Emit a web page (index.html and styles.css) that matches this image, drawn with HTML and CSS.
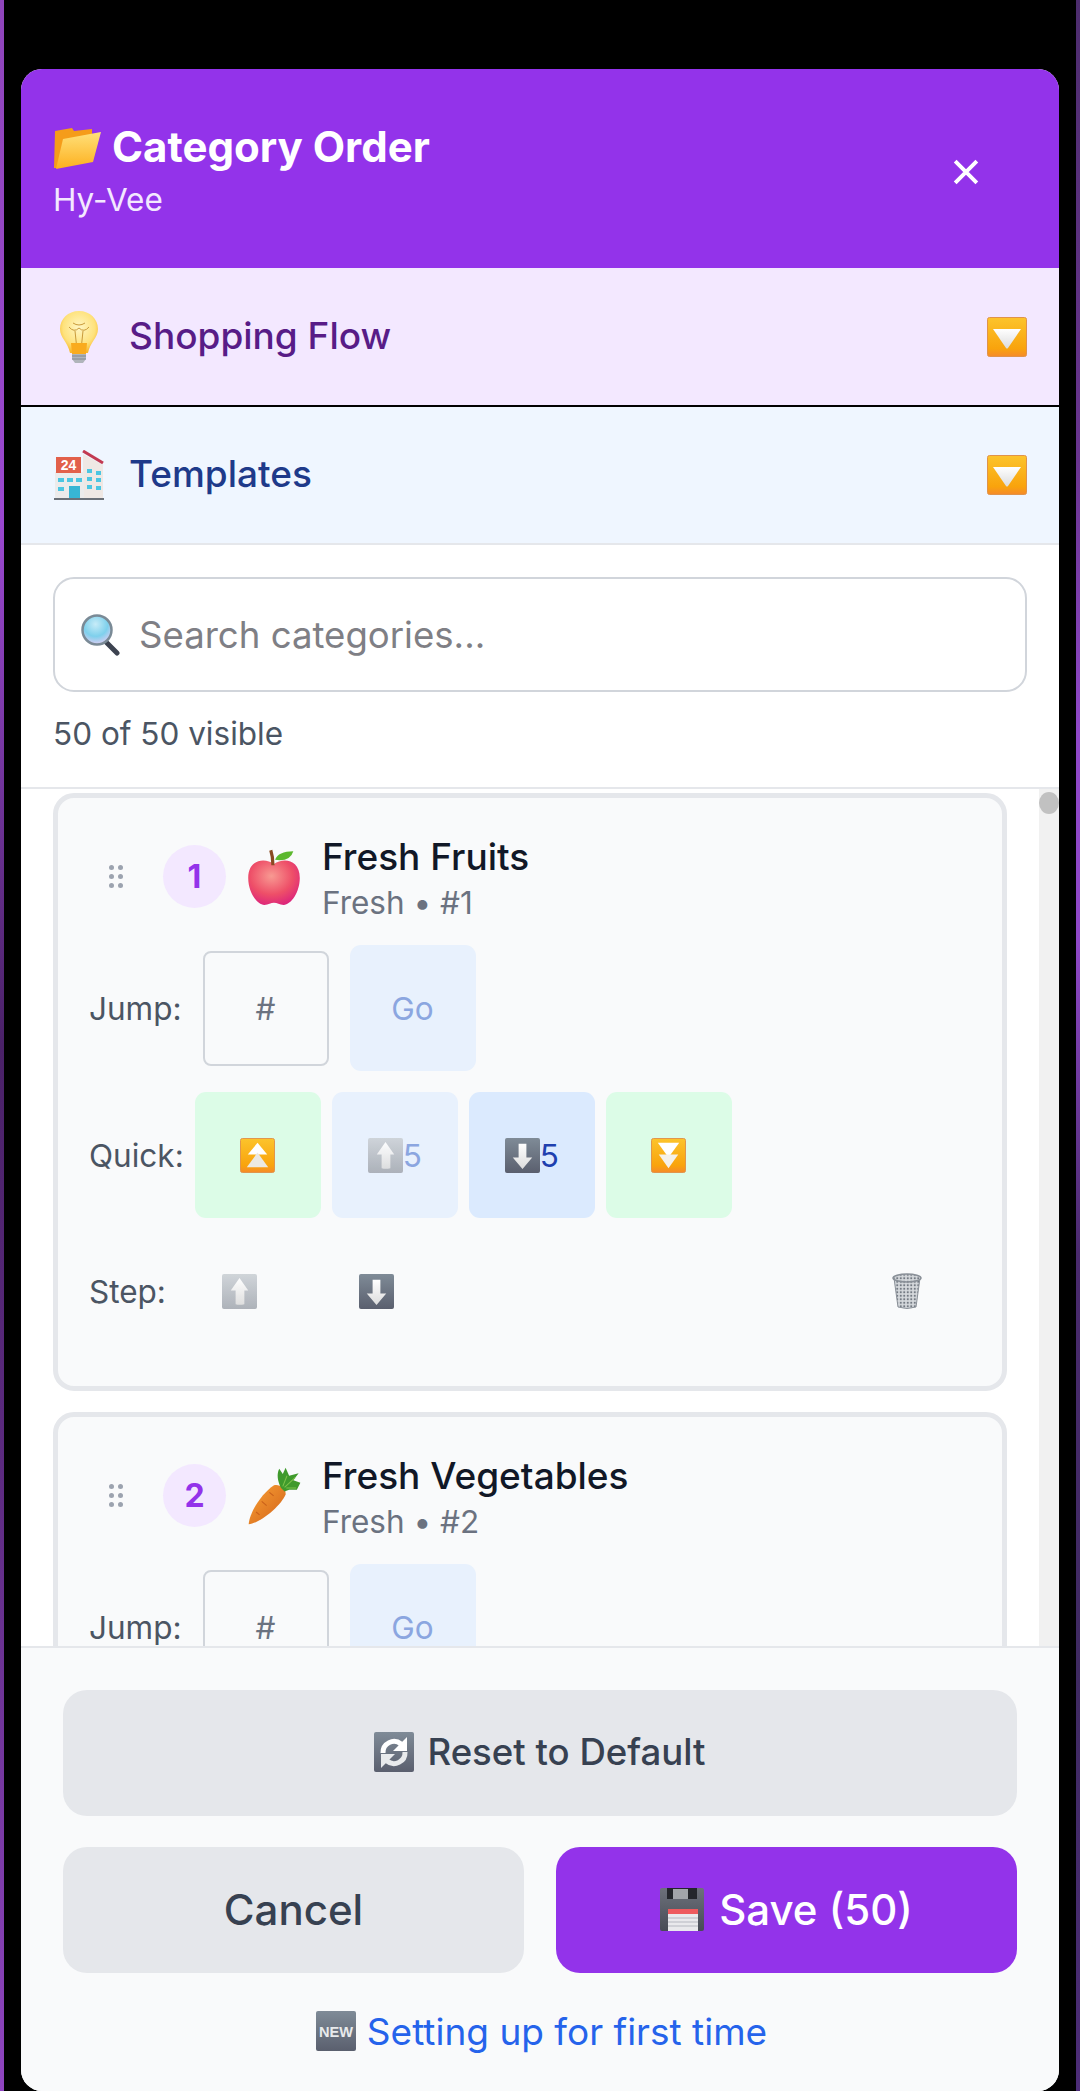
FILE: index.html
```html
<!DOCTYPE html>
<html lang="en">
<head>
  <meta charset="UTF-8">
  <title>Category Order</title>
  <link rel="stylesheet" href="styles.css">
</head>
<body>
  <svg class="sprites" width="0" height="0" aria-hidden="true">
    <defs>
      <linearGradient id="gOrange" x1="0" y1="0" x2="0" y2="1"><stop offset="0" stop-color="#fcc42c"/><stop offset=".8" stop-color="#f9a30c"/><stop offset="1" stop-color="#f58a2a"/></linearGradient>
      <linearGradient id="gLight" x1="0" y1="0" x2="0" y2="1"><stop offset="0" stop-color="#ccd1d6"/><stop offset="1" stop-color="#a6abb3"/></linearGradient>
      <linearGradient id="gDark" x1="0" y1="0" x2="0" y2="1"><stop offset="0" stop-color="#7f8b97"/><stop offset="1" stop-color="#5a5f6e"/></linearGradient>
      <linearGradient id="gFoot" x1="0" y1="0" x2="0" y2="1"><stop offset="0" stop-color="#ffffff"/><stop offset="1" stop-color="#dcdcdc"/></linearGradient>
      <linearGradient id="gCarrot" x1="0" y1="0" x2="1" y2="1"><stop offset="0" stop-color="#f9a134"/><stop offset="1" stop-color="#d2621a"/></linearGradient>
      <linearGradient id="gFolder" x1="0" y1="0" x2="0" y2="1"><stop offset="0" stop-color="#ffe07a"/><stop offset="1" stop-color="#fdb01e"/></linearGradient>
      <linearGradient id="gFloppy" x1="0" y1="0" x2="0" y2="1"><stop offset="0" stop-color="#6d717b"/><stop offset="1" stop-color="#474b55"/></linearGradient>
      <radialGradient id="gApple" cx=".45" cy=".35" r=".75"><stop offset="0" stop-color="#f89a92"/><stop offset=".55" stop-color="#ee4f68"/><stop offset="1" stop-color="#d81a80"/></radialGradient>
      <radialGradient id="gBulb" cx=".5" cy=".4" r=".6"><stop offset="0" stop-color="#fff6c4"/><stop offset=".7" stop-color="#fee27c"/><stop offset="1" stop-color="#f9b92e"/></radialGradient>
      <radialGradient id="gLens" cx=".45" cy=".3" r=".7"><stop offset="0" stop-color="#c7ecf8"/><stop offset=".6" stop-color="#7ed0ec"/><stop offset="1" stop-color="#d9cdf2"/></radialGradient>
      <pattern id="pMesh" width="3.500" height="3.500" patternUnits="userSpaceOnUse">
        <rect width="3.500" height="3.500" fill="#d6d9dd"/>
        <circle cx="1.750" cy="1.750" r="1.100" fill="#747a83"/>
      </pattern>
      <symbol id="i-folder" viewBox="0 0 48 44">
        <path d="M1 43 2 6l17-3 2 3 18-2v9L6 43z" fill="#f59c1a"/>
        <path d="M3 44 10 14l38-7-8 30z" fill="url(#gFolder)"/>
      </symbol>
      <symbol id="i-bulb" viewBox="0 0 40 54">
        <path d="M20 1C9 1 1 9 1 19c0 9 8 13 10 24h18c2-11 10-15 10-24C39 9 31 1 20 1z" fill="url(#gBulb)"/>
        <path d="M10 17q5 6 10 1 5 5 10-1M16 21l2 19M24 21l-2 19M14 13q6 4 12 0" fill="none" stroke="#c99a3a" stroke-width="1"/>
        <path d="M12 33h16l-1 11H13z" fill="#f9ab1e"/>
        <path d="M13 44h14v5l-3 4h-8l-3-4z" fill="#b0b5bb"/>
        <path d="M13 46h14M13 49h14" stroke="#838890"/>
      </symbol>
      <symbol id="i-hotel" viewBox="0 0 50 50">
        <path d="M29 4 49 15v34H29z" fill="#efe8e4"/>
        <path d="M29 1 49 13" stroke="#c23a52" stroke-width="3"/>
        <path d="M1 22h29v27H1z" fill="#ecebeb"/>
        <rect x="2" y="7" width="25" height="16" fill="#e2604a"/>
        <text x="14.500" y="20" class="svg-num">24</text>
        <path d="M33 19h5v4h-5zM42 21h5v4h-5zM33 27h5v4h-5zM42 28h5v4h-5zM33 35h5v4h-5zM42 36h5v4h-5zM4 28h6v4H4zM13 28h6v4h-6zM22 28h6v4h-6zM4 37h6v4H4z" fill="#4cc6e2"/>
        <path d="M15 36h11v13H15z" fill="#37b5d4"/>
        <path d="M0 48h50v2H0z" fill="#6a7078"/>
      </symbol>
      <symbol id="i-tri-down" viewBox="0 0 40 40">
        <rect x=".5" y=".5" width="39" height="39" rx="2" fill="url(#gOrange)" stroke="#e0934a"/>
        <path d="M6 12h28L21 31q-1 1-2 0z" fill="url(#gFoot)"/>
      </symbol>
      <symbol id="i-top" viewBox="0 0 36 36">
        <rect x=".5" y=".5" width="35" height="35" rx="2" fill="url(#gOrange)" stroke="#e0934a"/>
        <path d="M18 5 28 17H8z" fill="#fff"/>
        <path d="M18 15 29 30H7z" fill="#ece9e2"/>
      </symbol>
      <symbol id="i-bottom" viewBox="0 0 36 36">
        <rect x=".5" y=".5" width="35" height="35" rx="2" fill="url(#gOrange)" stroke="#e0934a"/>
        <path d="M7 5h22L18 20z" fill="#fff"/>
        <path d="M8 17h20L18 31z" fill="#f4f1ea"/>
      </symbol>
      <symbol id="i-up" viewBox="0 0 36 36">
        <rect width="36" height="36" rx="2" fill="url(#gLight)"/>
        <path d="M18 4 27 17h-4v14q-5 1.500-9 0V17H9z" fill="url(#gFoot)"/>
      </symbol>
      <symbol id="i-down" viewBox="0 0 36 36">
        <rect width="36" height="36" rx="2" fill="url(#gDark)"/>
        <path d="M14 6h8v14h6L18 32 8 20h6z" fill="url(#gFoot)"/>
      </symbol>
      <symbol id="i-search" viewBox="0 0 39 42">
        <path d="M25 28 36 39" stroke="#3d4350" stroke-width="5" stroke-linecap="round"/>
        <circle cx="16" cy="16" r="14.500" fill="url(#gLens)" stroke="#7a8a96" stroke-width="2.500"/>
      </symbol>
      <symbol id="i-apple" viewBox="0 0 50 54">
        <path d="M25 15C17 9 1 10 1 28c0 13 8 25 15 25 4 0 6-2 9-2s5 2 9 2c7 0 15-12 15-25C49 10 33 9 25 15z" fill="url(#gApple)"/>
        <path d="M24 16Q24 8 22 2" fill="none" stroke="#8a4a22" stroke-width="3"/>
        <path d="M26 11Q29 3 43 3 40 13 26 11z" fill="#5cb82e"/>
      </symbol>
      <symbol id="i-carrot" viewBox="0 0 150 165">
        <path d="M3 163C5 130 40 75 75 52c15-4 35 8 33 26C95 110 35 160 3 163z" fill="url(#gCarrot)"/>
        <path d="M40 98l14 12M62 72l12 10M24 128l10 8" stroke="#c9601a" stroke-width="3"/>
        <path d="M95 60C85 40 82 20 90 5l10 15 8-18 10 23 27-7-15 20 20 7-10 20h-22l-13 5z" fill="#3f9a2c"/>
        <path d="M100 55 112 25M105 58 135 30M110 60l28 0" stroke="#7ec24a" stroke-width="3"/>
      </symbol>
      <symbol id="i-trash" viewBox="0 0 30 36">
        <path d="M2 5h26l-4 29q-9 3-18 0z" fill="url(#pMesh)" stroke="#8a9098"/>
        <ellipse cx="15" cy="5" rx="14" ry="4" fill="url(#pMesh)" stroke="#8a9098" stroke-width="1.500"/>
      </symbol>
      <symbol id="i-reset" viewBox="0 0 40 40">
        <rect width="40" height="40" rx="2" fill="url(#gDark)"/>
        <path d="M9 21a11 11 0 0 1 18-9" fill="none" stroke="#fff" stroke-width="5"/>
        <path d="M33 5v14H19z" fill="#fff"/>
        <path d="M31 20a11 11 0 0 1-18 9" fill="none" stroke="#e8eaec" stroke-width="5"/>
        <path d="M7 36V22h14z" fill="#e8eaec"/>
      </symbol>
      <symbol id="i-save" viewBox="0 0 44 43">
        <rect width="44" height="43" rx="2" fill="url(#gFloppy)"/>
        <path d="M7 0h30v11H7z" fill="#24262c"/>
        <path d="M13 1h15v10H13z" fill="#a2a5aa"/>
        <path d="M8 21h30v22H8z" fill="#e9e9ec"/>
        <path d="M8 21h30v5H8z" fill="#ee5a5e"/>
        <path d="M8 30h30M8 34h30M8 38h30" stroke="#b6b8c0" stroke-width="1.200"/>
      </symbol>
      <symbol id="i-new" viewBox="0 0 40 40">
        <rect width="40" height="40" rx="2" fill="url(#gDark)"/>
        <text x="20" y="26" class="svg-new" textLength="34" lengthAdjust="spacingAndGlyphs">NEW</text>
      </symbol>
    </defs>
  </svg>

  <div class="overlay">
    <div class="modal">
      <header class="modal-head">
        <div>
          <h1><svg class="ic-folder"><use href="#i-folder"/></svg>Category Order</h1>
          <p class="store">Hy-Vee</p>
        </div>
        <button class="close" aria-label="Close">
          <svg width="26" height="26" viewBox="0 0 24 24"><path d="M2 2l20 20M22 2 2 22" stroke="#fff" stroke-width="3.600"/></svg>
        </button>
      </header>

      <div class="panel panel-flow">
        <svg class="panel-ic ic-bulb"><use href="#i-bulb"/></svg>
        <span class="panel-label">Shopping Flow</span>
        <svg class="panel-arrow"><use href="#i-tri-down"/></svg>
      </div>
      <div class="panel panel-tpl">
        <svg class="panel-ic ic-hotel"><use href="#i-hotel"/></svg>
        <span class="panel-label">Templates</span>
        <svg class="panel-arrow"><use href="#i-tri-down"/></svg>
      </div>

      <div class="search-wrap">
        <div class="search">
          <svg class="ic-search"><use href="#i-search"/></svg>
          <span>Search categories...</span>
        </div>
        <p class="count">50 of 50 visible</p>
      </div>

      <div class="list-wrap">
        <div class="list">
          <article class="card">
            <div class="card-top">
              <span class="grip"><i></i><i></i><i></i><i></i><i></i><i></i></span>
              <span class="num">1</span>
              <svg class="cat-ic"><use href="#i-apple"/></svg>
              <div class="cat-text">
                <div class="cat-name">Fresh Fruits</div>
                <div class="cat-sub">Fresh • #1</div>
              </div>
            </div>
            <div class="row row-jump">
              <span class="row-label">Jump:</span>
              <span class="jump-input">#</span>
              <span class="btn btn-off">Go</span>
            </div>
            <div class="row row-quick">
              <span class="row-label">Quick:</span>
              <span class="btn btn-green"><svg class="em"><use href="#i-top"/></svg></span>
              <span class="btn btn-off"><svg class="em em-faded"><use href="#i-up"/></svg>5</span>
              <span class="btn btn-on"><svg class="em"><use href="#i-down"/></svg>5</span>
              <span class="btn btn-green"><svg class="em"><use href="#i-bottom"/></svg></span>
            </div>
            <div class="row row-step">
              <span class="row-label">Step:</span>
              <span class="step"><svg class="em em-faded"><use href="#i-up"/></svg></span>
              <span class="step"><svg class="em"><use href="#i-down"/></svg></span>
              <span class="step step-del"><svg class="em-trash"><use href="#i-trash"/></svg></span>
            </div>
          </article>

          <article class="card">
            <div class="card-top">
              <span class="grip"><i></i><i></i><i></i><i></i><i></i><i></i></span>
              <span class="num">2</span>
              <svg class="cat-ic"><use href="#i-carrot"/></svg>
              <div class="cat-text">
                <div class="cat-name">Fresh Vegetables</div>
                <div class="cat-sub">Fresh • #2</div>
              </div>
            </div>
            <div class="row row-jump">
              <span class="row-label">Jump:</span>
              <span class="jump-input">#</span>
              <span class="btn btn-off">Go</span>
            </div>
          </article>
        </div>
        <div class="scrollbar"><span class="thumb"></span></div>
      </div>

      <footer class="modal-foot">
        <button class="act act-grey"><svg class="ic-act ic-reset"><use href="#i-reset"/></svg>Reset to Default</button>
        <div class="act-row">
          <button class="act act-grey act-big">Cancel</button>
          <button class="act act-save act-big"><svg class="ic-save"><use href="#i-save"/></svg>Save (50)</button>
        </div>
        <a class="first-time"><svg class="ic-act"><use href="#i-new"/></svg>Setting up for first time</a>
      </footer>
    </div>
  </div>
</body>
</html>
```

FILE: styles.css
```css
* {
  box-sizing: border-box;
}
html, body {
  height: 100%;
}
body {
  margin: 0;
  font-family: Inter, "Liberation Sans", sans-serif;
  background:
    linear-gradient(#8f45bb 0, #9a48d0 25%, #4a2168 50%, #5c2a80 70%, #8f45c0 100%) left / 4px 100% no-repeat,
    linear-gradient(#4d2d6e 0, #6a3590 22%, #8f48c8 35%, #8f48c8 45%, #4a2a6e 60%, #3f2a62 80%, #4d2d78 100%) right / 4px 100% no-repeat,
    #000;
  overflow: hidden;
}
.sprites {
  display: block;
  height: 0;
}
.svg-num {
  font: 700 14px "Liberation Sans", sans-serif;
  fill: #fff;
  text-anchor: middle;
}
.svg-new {
  font: 700 15px "Liberation Sans", sans-serif;
  fill: #e8eaec;
  text-anchor: middle;
}
.overlay {
  height: 2091px;
  padding: 69px 21px 0;
}
.modal {
  height: 2022px;
  background: #f9fafb;
  border-radius: 21px;
  overflow: hidden;
  display: flex;
  flex-direction: column;
}
.modal-head {
  height: 199px;
  background: #9333ea;
  color: #fff;
  padding: 54px 32px 0;
  display: flex;
  justify-content: space-between;
  align-items: flex-start;
  flex-shrink: 0;
}
.modal-head h1 {
  margin: 0;
  font-size: 42px;
  font-weight: 700;
  line-height: 48px;
  display: flex;
  align-items: center;
}
.ic-folder {
  width: 48px;
  height: 44px;
  margin-right: 11px;
}
.store {
  margin: 9px 0 0;
  font-size: 31.500px;
  line-height: 40px;
  color: #f3e8ff;
}
.close {
  background: none;
  border: 0;
  padding: 0;
  width: 32px;
  height: 32px;
  margin: 33px 45px 0 0;
  display: flex;
  align-items: center;
  justify-content: center;
}
.panel {
  height: 138px;
  display: flex;
  align-items: center;
  padding: 0 32px;
  flex-shrink: 0;
}
.panel-flow {
  background: #f3e8ff;
  border-bottom: 2px solid #000;
  height: 139px;
}
.panel-tpl {
  background: #eff6ff;
  border-bottom: 2px solid #e5e7eb;
}
.panel-ic {
  flex-shrink: 0;
}
.ic-bulb {
  width: 40px;
  height: 54px;
  margin: 0 30px 0 6px;
}
.ic-hotel {
  width: 50px;
  height: 50px;
  margin: 0 25px 0 1px;
}
.panel-label {
  flex: 1;
  font-size: 37px;
  font-weight: 500;
  line-height: 44px;
  margin-top: -2px;
}
.panel-flow .panel-label {
  color: #581c87;
}
.panel-tpl .panel-label {
  color: #1e3a8a;
}
.panel-arrow {
  width: 40px;
  height: 40px;
}
.search-wrap {
  background: #fff;
  padding: 32px 32px 0;
  height: 244px;
  border-bottom: 2px solid #e5e7eb;
  flex-shrink: 0;
}
.search {
  height: 115px;
  border: 2px solid #d1d5db;
  border-radius: 21px;
  display: flex;
  align-items: center;
  padding-left: 26px;
  font-size: 36.600px;
  color: #7f7f85;
}
.ic-search {
  width: 39px;
  height: 42px;
  margin-right: 19px;
}
.count {
  margin: 23px 0 0;
  font-size: 31.500px;
  line-height: 38px;
  color: #4b5563;
}
.list-wrap {
  flex: 1;
  min-height: 0;
  display: flex;
  background: #fff;
}
.list {
  flex: 1;
  min-width: 0;
  padding: 4px 32px 0;
  overflow: hidden;
}
.scrollbar {
  width: 20px;
  background: #f1f1f1;
}
.thumb {
  display: block;
  width: 20px;
  height: 22px;
  margin-top: 3px;
  border-radius: 50%;
  background: #c1c1c1;
}
.card {
  width: 954px;
  height: 598px;
  background: #f9fafb;
  border: 5px solid #e5e7eb;
  border-radius: 21px;
  padding: 0 31px;
  margin-bottom: 21px;
}
.card-top {
  display: flex;
  align-items: center;
  height: 147px;
  padding-top: 10px;
}
.grip {
  width: 14px;
  display: grid;
  grid-template-columns: 5px 5px;
  gap: 4px;
  margin: 0 40px 0 20px;
  flex-shrink: 0;
}
.grip i {
  width: 5px;
  height: 5px;
  border-radius: 50%;
  background: #9ca3af;
}
.num {
  width: 63px;
  height: 63px;
  border-radius: 50%;
  background: #f3e8ff;
  color: #9333ea;
  font-size: 32px;
  font-weight: 700;
  display: flex;
  align-items: center;
  justify-content: center;
  margin-right: 20px;
}
.cat-ic {
  width: 56px;
  height: 58px;
  margin-right: 20px;
}
.cat-text {
  padding-top: 6px;
}
.cat-name {
  font-size: 37px;
  font-weight: 500;
  line-height: 46px;
  color: #111827;
}
.cat-sub {
  font-size: 31.500px;
  line-height: 46px;
  color: #6b7280;
}
.row {
  display: flex;
  align-items: center;
  font-size: 31.500px;
}
.row-label {
  color: #4b5563;
}
.row-jump {
  height: 126px;
  gap: 21px;
}
.row-quick {
  height: 126px;
  margin-top: 21px;
  gap: 11px;
}
.row-step {
  height: 96px;
  margin-top: 25px;
}
.row-step .row-label {
  margin-right: 5px;
}
.jump-input {
  width: 126px;
  height: 115px;
  border: 2px solid #d1d5db;
  border-radius: 8px;
  color: #6b7280;
  display: flex;
  align-items: center;
  justify-content: center;
}
.btn {
  width: 126px;
  height: 126px;
  border-radius: 11px;
  display: flex;
  align-items: center;
  justify-content: center;
}
.btn-off {
  background: #e8f1fd;
  color: #8ba6e0;
}
.btn-on {
  background: #dbeafe;
  color: #1e40af;
}
.btn-green {
  background: #dcfce7;
}
.em {
  width: 35px;
  height: 35px;
}
.em-faded {
  opacity: .9;
}
.step {
  width: 137px;
  display: flex;
  justify-content: center;
}
.step-del {
  width: 128px;
  margin-left: auto;
}
.em-trash {
  width: 30px;
  height: 36px;
}
.modal-foot {
  height: 445px;
  flex-shrink: 0;
  background: #f9fafb;
  border-top: 2px solid #e5e7eb;
  padding: 42px 42px 0;
}
.act {
  height: 126px;
  border: 0;
  border-radius: 24px;
  padding: 0 0 2px;
  font-family: inherit;
  font-size: 36.600px;
  font-weight: 500;
  display: flex;
  align-items: center;
  justify-content: center;
  width: 100%;
}
.act-big {
  font-size: 42px;
}
.act-grey {
  background: #e5e7eb;
  color: #374151;
}
.act-save {
  background: #9333ea;
  color: #fff;
}
.act-row {
  display: flex;
  gap: 32px;
  margin-top: 31px;
}
.ic-act {
  width: 40px;
  height: 40px;
  margin-right: 11px;
}
.ic-reset {
  margin-right: 13px;
}
.ic-save {
  width: 44px;
  height: 43px;
  margin-right: 15px;
}
.first-time {
  display: flex;
  align-items: center;
  justify-content: center;
  margin-top: 36px;
  padding-left: 3px;
  height: 44px;
  font-size: 37px;
  color: #2563eb;
}
```
